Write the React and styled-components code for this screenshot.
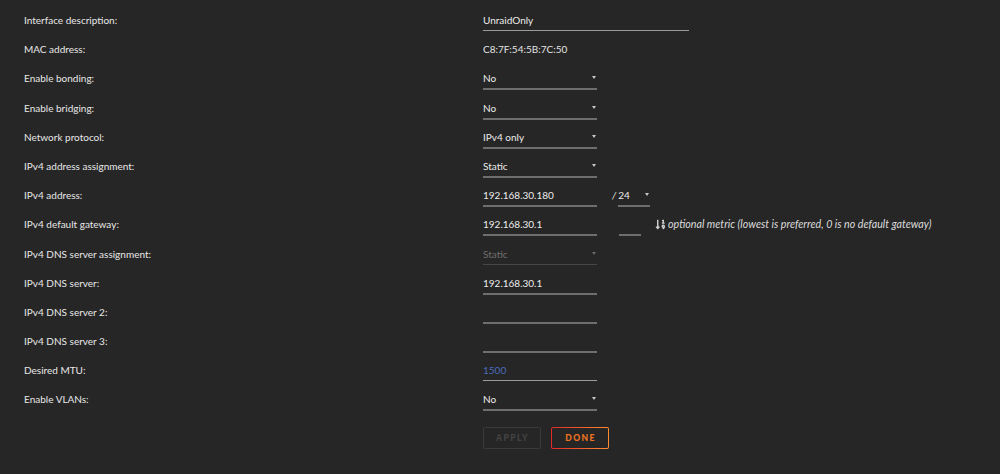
import React from 'react';
import styled, { createGlobalStyle, css } from 'styled-components';
import { FaSortNumericDown } from 'react-icons/fa';

const GlobalStyle = createGlobalStyle`
    html, body {
        margin: 0;
        padding: 0;
        background: #262626;
    }
    body {
        font-family: Lato, "Open Sans", "Liberation Sans", sans-serif;
        font-size: 10px;
        color: #e4e4e4;
    }
`

const Page = styled.div`
    width: 1000px;
    height: 474px;
    padding-top: 12px;
    box-sizing: border-box;
    background: #262626;
`

const Row = styled.div`
    display: grid;
    grid-template-columns: 459px 1fr;
    align-items: start;
    height: 29.2px;
    padding-left: 24px;
    line-height: 16px;
`

const Label = styled.div`
    color: #e8e8e8;
`

const Cell = styled.div`
    display: flex;
    align-items: flex-start;
`

const Field = styled.div`
    position: relative;
    box-sizing: border-box;
    width: ${p => p.$width || 114}px;
    height: ${p => 16 + 2 + (p.$thin ? 1 : 2)}px;
    padding-bottom: 2px;
    border-bottom: ${p => p.$thin ? '1px solid #9a9a9a' : '2px solid #6e6e6e'};
    color: ${p => p.$muted ? '#6f6f6f' : p.$blue ? '#4a6cbc' : '#ececec'};
    ${p => p.$muted && css`
        border-bottom: 1px solid #464646;
        height: 19px;
    `}
`

const Arrow = styled.span`
    position: absolute;
    right: 1px;
    top: 6px;
    width: 0;
    height: 0;
    border-left: 2.5px solid transparent;
    border-right: 2.5px solid transparent;
    border-top: 3.5px solid ${p => p.$muted ? '#6a6a6a' : '#c8c8c8'};
`

const Slash = styled.span`
    margin-left: 15px;
    margin-right: 2px;
    font-style: italic;
    color: #e0e0e0;
`

const Hint = styled.span`
    display: inline-flex;
    align-items: center;
    gap: 2px;
    height: 16px;
    margin-left: 14px;
    font-size: 10.7px;
    font-style: italic;
    color: #dcdcdc;
    svg {
        width: 11px;
        height: 11px;
        color: #d6d6d6;
    }
`

const Buttons = styled.div`
    display: flex;
    gap: 10px;
    margin-top: 6px;
    margin-left: 483px;
`

const Button = styled.button`
    box-sizing: border-box;
    width: 58px;
    height: 22px;
    padding: 0 0 0 1px;
    background: transparent;
    border-radius: 2px;
    font-family: Lato, "Liberation Sans", sans-serif;
    font-weight: 900;
    font-size: 8.5px;
    letter-spacing: 1.4px;
    ${p => p.$primary ? css`
        border: 1px solid transparent;
        background:
            linear-gradient(#262626, #262626) padding-box,
            linear-gradient(90deg, #e22828, #ff8c2f) border-box;
        color: #f0741f;
    ` : css`
        border: 1px solid #3a3a3a;
        color: #434343;
    `}
`

const rows = [
    { label: 'Interface description:', value: 'UnraidOnly', width: 206, thin: true },
    { label: 'MAC address:', value: 'C8:7F:54:5B:7C:50', plain: true },
    { label: 'Enable bonding:', value: 'No', select: true },
    { label: 'Enable bridging:', value: 'No', select: true },
    { label: 'Network protocol:', value: 'IPv4 only', select: true },
    { label: 'IPv4 address assignment:', value: 'Static', select: true },
    { label: 'IPv4 address:', value: '192.168.30.180', netmask: true },
    { label: 'IPv4 default gateway:', value: '192.168.30.1', metric: true },
    { label: 'IPv4 DNS server assignment:', value: 'Static', select: true, muted: true },
    { label: 'IPv4 DNS server:', value: '192.168.30.1' },
    { label: 'IPv4 DNS server 2:', value: '' },
    { label: 'IPv4 DNS server 3:', value: '' },
    { label: 'Desired MTU:', value: '1500', blue: true, thin: true },
    { label: 'Enable VLANs:', value: 'No', select: true },
];

function FormRow({ row }) {
    return (
        <Row>
            <Label>{row.label}</Label>
            <Cell>
                {row.plain ? (
                    <span>{row.value}</span>
                ) : (
                    <Field $width={row.width} $thin={row.thin} $muted={row.muted} $blue={row.blue}>
                        {row.value}
                        {row.select && <Arrow $muted={row.muted} />}
                    </Field>
                )}
                {row.netmask && (
                    <>
                        <Slash>/</Slash>
                        <Field $width={32}>
                            24
                            <Arrow />
                        </Field>
                    </>
                )}
                {row.metric && (
                    <>
                        <Field $width={22} style={{ marginLeft: 22 }} />
                        <Hint>
                            <FaSortNumericDown />
                            optional metric (lowest is preferred, 0 is no default gateway)
                        </Hint>
                    </>
                )}
            </Cell>
        </Row>
    )
}

export default function App() {
    return (
        <>
            <GlobalStyle />
            <Page>
                {rows.map((row) => <FormRow key={row.label} row={row} />)}
                <Buttons>
                    <Button disabled>APPLY</Button>
                    <Button $primary>DONE</Button>
                </Buttons>
            </Page>
        </>
    )
}
